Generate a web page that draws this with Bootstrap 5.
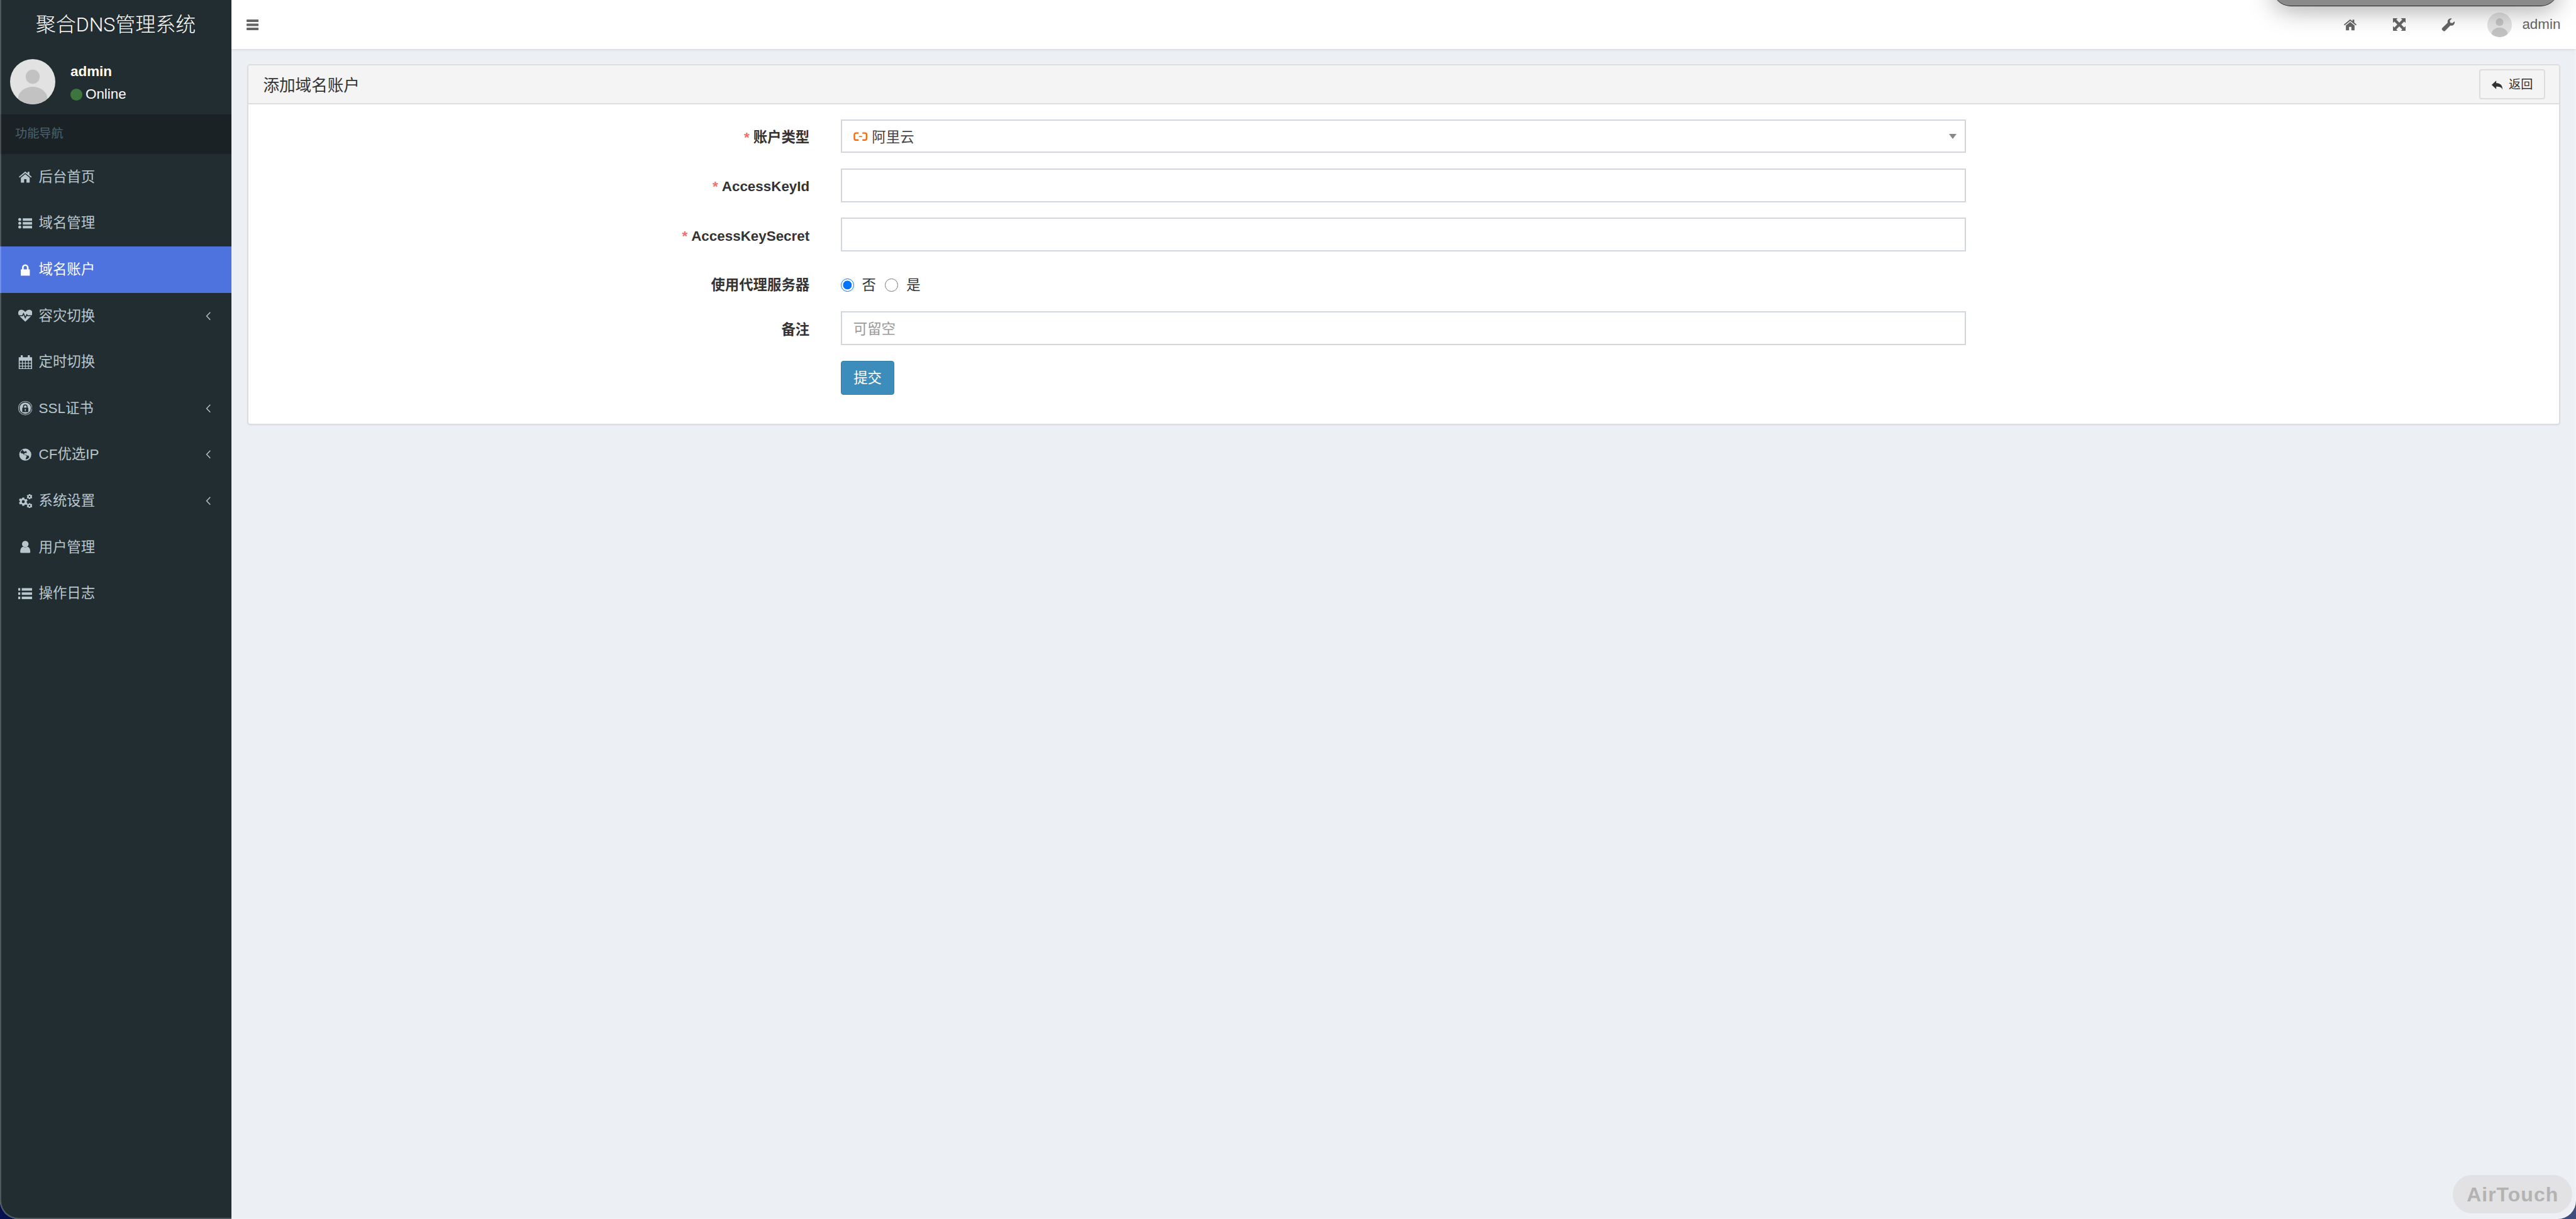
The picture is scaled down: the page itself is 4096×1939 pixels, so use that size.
<!DOCTYPE html>
<html lang="zh-CN">
<head>
<meta charset="UTF-8">
<title>添加域名账户</title>
<link href="https://cdn.jsdelivr.net/npm/bootstrap@5.3.0/dist/css/bootstrap.min.css" rel="stylesheet">
<style>
html, body { height: 100%; }
body { background: linear-gradient(90deg, #07104f, #3f4d7e); color: #333; font-family: "Liberation Sans", "Noto Sans CJK SC", sans-serif; font-size: 22.4px; overflow: hidden; }
.app-shell { height: 1939px; position: relative; overflow: hidden; background: #ecf0f5; border-radius: 0 0 29px 29px; }
.side-bar { width: 368px; background: #222d32; flex: none; }
.side-brand { height: 78.4px; color: #fff; font-size: 32px; font-weight: 300; font-family: Roboto, "Noto Sans CJK SC Light", "Noto Sans CJK SC", sans-serif; }
.user-panel { height: 104px; padding-left: 16px; gap: 24px; }
.user-pic { width: 72px; height: 72px; display: block; }
.user-info { margin-top: 4px; }
.user-name { font-weight: 700; color: #fff; line-height: 1; margin-bottom: 14px; }
.user-state { color: #fff; line-height: 1; gap: 5px; }
.state-dot { width: 19px; height: 19px; border-radius: 50%; background: #3c763d; display: inline-block; }
.nav-head { height: 62.4px; background: #1a2226; color: #4b646f; font-size: 19.2px; padding-left: 24px; }
.menu-item { height: 73.6px; color: #b8c7ce; padding: 0 32px 0 28.8px; text-decoration: none; }
.menu-item.is-on { background: #4e73df; color: #fff; }
.menu-ico { width: 22.4px; height: 22.4px; margin-right: 10.4px; fill: currentColor; flex: none; }
.menu-arrow { width: 8.6px; height: 15.6px; margin-left: auto; fill: none; stroke: currentColor; stroke-width: 1.6; }
.main-col { min-width: 0; }
.top-bar { height: 78.4px; background: #fff; box-shadow: 0 1px 4px rgba(0,0,0,.12); padding: 0 24.6px 0 24px; position: relative; }
.top-ico { fill: #666; display: block; }
.top-right { gap: 0; margin-left: auto; color: #666; }
.top-link { width: 77.6px; display: flex; justify-content: center; }
.top-name { margin-left: 16px; }
.page-body { padding: 24px 24.8px 0 24.8px; }
.form-box { border: 2px solid #ddd; border-radius: 5px; background: #fff; box-shadow: 0 1px 2px rgba(0,0,0,.05); }
.box-head { height: 61.2px; background: #f4f4f4; border-bottom: 2px solid #ddd; padding: 0 22.6px 0 23.6px; border-radius: 4px 4px 0 0; }
.box-title { font-size: 25.6px; margin: 0; padding-top: 4px; font-weight: 400; }
.back-btn { height: 47.2px; width: 104.8px; border: 2px solid #ddd; border-radius: 4px; background: #f4f4f4; color: #333; font-size: 19.2px; padding: 3px 0 0; gap: 8px; }
.box-main { padding: 24px 0 46px; }
.form-line { margin-bottom: 24.8px; min-height: 53.6px; }
.form-line.is-thin { min-height: 57.6px; margin-bottom: 12.8px; }
.line-label { width: 892.4px; flex: none; margin: 0; padding-top: 5px; text-align: right; font-weight: 700; }
.is-thin .line-label { padding-top: 0; }
.req-mark { color: #f56c6c; margin-right: 6px; }
.line-field { width: 1789.6px; margin-left: 49.6px; flex: none; position: relative; }
.text-field.form-control, .select-field { height: 53.6px; border: 2px solid #d2d6de; border-radius: 0; font-size: 22.4px; padding: 4px 18px 0; color: #444; box-shadow: none; }
.text-field.form-control::placeholder { color: #999; }
.select-field { background: #fff; gap: 7.2px; }
.ali-mark { width: 22.4px; height: 14.4px; flex: none; margin-top: -3px; }
.select-caret { position: absolute; right: 15px; top: 23px; width: 0; height: 0; border-left: 6px solid transparent; border-right: 6px solid transparent; border-top: 8px solid #888; }
.radio-opt { gap: 13px; margin-right: 14.4px; font-weight: 400; }
.radio-opt .form-check-input { width: 20.8px; height: 20.8px; margin: 0; border: 1.6px solid #767676; background-color: #fff; }
.radio-opt .form-check-input:checked { background-color: #fff; border-color: #0075ff; background-image: radial-gradient(circle closest-side, #0075ff 70%, #fff 76%); }
.submit-btn { width: 85.6px; height: 54.4px; padding: 2px 0 0; background: #3c8dbc; border: 1px solid #367fa9; border-radius: 4px; color: #fff; font-size: 22.4px; }
.float-bar { position: absolute; top: -30px; left: 3613.6px; width: 454.4px; height: 40.4px; background: #8a8a8a; border-bottom: 1px solid #222; border-radius: 0 0 28px 28px; box-shadow: 0 4px 40px rgba(0,0,0,.38); }
.air-pill { position: absolute; left: 3900px; top: 1868.8px; width: 190.4px; height: 61.6px; border-radius: 31px; background: #e2e2e4; color: #b3b3b3; font-size: 32px; font-weight: 700; letter-spacing: 1px; }
.edge-line { position: absolute; inset: 0; border: 2px solid rgba(255,255,255,.2); border-top: 0; border-radius: 0 0 29px 29px; pointer-events: none; }
</style>
</head>
<body>
<div class="app-shell d-flex">
  <aside class="side-bar">
    <div class="side-brand d-flex align-items-center justify-content-center">聚合DNS管理系统</div>
    <div class="user-panel d-flex align-items-center">
      <svg class="user-pic" viewBox="0 0 90 90"><defs><clipPath id="avClip"><circle cx="45" cy="45" r="45"/></clipPath></defs><circle cx="45" cy="45" r="45" fill="#e2e2e2"/><g clip-path="url(#avClip)" fill="#c2c2c2"><circle cx="45" cy="35" r="14"/><ellipse cx="45" cy="78" rx="29" ry="23"/></g></svg>
      <div class="user-info">
        <div class="user-name">admin</div>
        <div class="user-state d-flex align-items-center"><span class="state-dot"></span>Online</div>
      </div>
    </div>
    <div class="nav-head d-flex align-items-center">功能导航</div>
    <nav class="d-flex flex-column">
      <a class="menu-item d-flex align-items-center" href="#"><svg class="menu-ico" viewBox="2 3 24 24"><path d="M14 6 3 15l1.200 1.500L14 8.600l9.800 7.900L25 15l-4-3.300V6.500h-3v2.700zM6.500 16.700V25h5.500v-6h4v6h5.500v-8.300L14 10.500z"/></svg>后台首页</a>
      <a class="menu-item d-flex align-items-center" href="#"><svg class="menu-ico" viewBox="0 0 28 28"><circle cx="3" cy="6.500" r="3"/><circle cx="3" cy="14" r="3"/><circle cx="3" cy="21.500" r="3"/><path d="M9 4h19v5H9zM9 11.500h19v5H9zM9 19h19v5H9z"/></svg>域名管理</a>
      <a class="menu-item is-on d-flex align-items-center" href="#"><svg class="menu-ico" viewBox="0 0 28 28"><path fill-rule="evenodd" d="M5 13h2.500V9.500a6.500 6.500 0 0 1 13 0V13H23v12.500H5zM10.800 13h6.400V9.500a3.200 3.200 0 0 0-6.400 0z"/></svg>域名账户</a>
      <a class="menu-item d-flex align-items-center" href="#"><svg class="menu-ico" viewBox="0 0 28 28"><path d="M14 26 2 14.500C-1.500 10-.5 4 4 2.500c4-1.300 7.500.5 10 4 2.500-3.500 6-5.300 10-4 4.500 1.500 5.500 7.500 2 12z"/><path fill="none" stroke="#222d32" stroke-width="2" d="M0 14h8.500l2-4 3.500 8 3-6 1.500 2H28"/></svg>容灾切换<svg class="menu-arrow" viewBox="0 0 10 18"><path d="M8.500 2 1.800 9l6.700 7"/></svg></a>
      <a class="menu-item d-flex align-items-center" href="#"><svg class="menu-ico" viewBox="0 0 28 28"><path fill-rule="evenodd" d="M1 4h4V1.500a2 2 0 0 1 4 0V4h10V1.500a2 2 0 0 1 4 0V4h4.500v24H1zM3 11v4h4.500v-4zM9 11v4h4.500v-4zM15 11v4h4.500v-4zM21 11v4h4.500v-4zM3 16.500V21h4.500v-4.500zM9 16.500V21h4.500v-4.500zM15 16.500V21h4.500v-4.500zM21 16.500V21h4.500v-4.500zM3 22.500V26h4.500v-3.500zM9 22.500V26h4.500v-3.500zM15 22.500V26h4.500v-3.500zM21 22.500V26h4.500v-3.500z"/></svg>定时切换</a>
      <a class="menu-item d-flex align-items-center" href="#"><svg class="menu-ico" viewBox="0 0 28 28"><path fill-rule="evenodd" d="M14 0a14 14 0 1 1 0 28 14 14 0 0 1 0-28zm0 1a13 13 0 1 0 0 26 13 13 0 0 0 0-26zm0 1.800a11.200 11.200 0 1 1 0 22.400 11.200 11.200 0 0 1 0-22.400zM8 13h1.500v-2a4.500 4.500 0 0 1 9 0v2H20v9H8zm3.500 0h5v-2a2.500 2.500 0 0 0-5 0zm2.500 2.500a1.400 1.400 0 0 0-.7 2.600V20h1.400v-1.900a1.400 1.400 0 0 0-.7-2.600z"/></svg>SSL证书<svg class="menu-arrow" viewBox="0 0 10 18"><path d="M8.500 2 1.800 9l6.700 7"/></svg></a>
      <a class="menu-item d-flex align-items-center" href="#"><svg class="menu-ico" viewBox="0 0 28 28"><path fill-rule="evenodd" d="M14 2a12 12 0 1 1 0 24 12 12 0 0 1 0-24zM9 4.500c-2 1-4 3-4.600 5.500L7 11.500l2.500.5 2 2.500 3.500.5 2 2-1.500 3-1 3.500c3.500-.5 6-2 7.500-4.500l-1.500-3-3-.5-2.500-1.500-2.500.5-1-2 2-2 3 .5.500-3-2.500-1.500-1 1.500-2.500-.5z"/></svg>CF优选IP<svg class="menu-arrow" viewBox="0 0 10 18"><path d="M8.500 2 1.800 9l6.700 7"/></svg></a>
      <a class="menu-item d-flex align-items-center" href="#"><svg class="menu-ico" viewBox="0 0 28 28"><path fill-rule="evenodd" d="M8 7h4l.6 2.600 1.500.8 2.500-.9 2 3.400-2 1.800v1.600l2 1.800-2 3.400-2.500-.9-1.500.8L12 23H8l-.6-2.600-1.500-.8-2.500.9-2-3.400 2-1.800v-1.600l-2-1.800 2-3.400 2.500.9 1.500-.8zm2 5a3 3 0 1 0 0 6 3 3 0 0 0 0-6z"/><path fill-rule="evenodd" d="M21 0h3l.3 1.500 1.500.6 1.200-.8 1 2-1 1v1.400l1 1-1 2-1.200-.8-1.500.6L24 10h-3l-.3-1.500-1.500-.6-1.200.8-1-2 1-1V4.300l-1-1 1-2 1.200.8 1.500-.6zm1.500 3.400a1.600 1.600 0 1 0 0 3.200 1.600 1.600 0 0 0 0-3.200zM21 18h3l.3 1.500 1.500.6 1.200-.8 1 2-1 1v1.400l1 1-1 2-1.200-.8-1.500.6L24 28h-3l-.3-1.500-1.500-.6-1.200.8-1-2 1-1v-1.400l-1-1 1-2 1.200.8 1.500-.6zm1.500 3.400a1.600 1.600 0 1 0 0 3.200 1.600 1.600 0 0 0 0-3.200z"/></svg>系统设置<svg class="menu-arrow" viewBox="0 0 10 18"><path d="M8.500 2 1.800 9l6.700 7"/></svg></a>
      <a class="menu-item d-flex align-items-center" href="#"><svg class="menu-ico" viewBox="0 0 28 28"><circle cx="14" cy="8" r="6.500"/><path d="M4 24c0-6 2-10 6-10.500 2.500 1.500 5.500 1.500 8 0 4 .5 6 4.500 6 10.500 0 1-1 1.500-2 1.500H6c-1 0-2-.5-2-1.500z"/></svg>用户管理</a>
      <a class="menu-item d-flex align-items-center" href="#"><svg class="menu-ico" viewBox="0 0 28 28"><path d="M0 3h4v5H0zM0 11.500h4v5H0zM0 20h4v5H0zM7 3h21v5H7zM7 11.500h21v5H7zM7 20h21v5H7z"/></svg>操作日志</a>
    </nav>
  </aside>
  <main class="main-col flex-grow-1">
    <header class="top-bar d-flex align-items-center">
      <svg class="top-ico" width="19.200" height="17" viewBox="0 0 19.200 17"><rect width="19.200" height="4" rx="1"/><rect y="6.500" width="19.200" height="4" rx="1"/><rect y="13" width="19.200" height="4" rx="1"/></svg>
      <div class="top-right d-flex align-items-center">
        <span class="top-link"><svg class="top-ico" width="22" height="22" viewBox="2 3 24 24"><path d="M14 6 3 15l1.200 1.500L14 8.600l9.800 7.900L25 15l-4-3.300V6.500h-3v2.700zM6.500 16.700V25h5.500v-6h4v6h5.500v-8.300L14 10.500z"/></svg></span>
        <span class="top-link"><svg class="top-ico" width="20" height="20" viewBox="0 0 20 20"><path d="M0 0h7.500L5.300 2.200 10 6.900l4.700-4.700L12.500 0H20v7.500l-2.200-2.200L13.100 10l4.700 4.700 2.200-2.200V20h-7.500l2.200-2.200L10 13.100l-4.700 4.700L7.500 20H0v-7.500l2.200 2.200L6.900 10 2.200 5.300 0 7.500z"/></svg></span>
        <span class="top-link"><svg class="top-ico" width="22" height="22" viewBox="0 0 24 24"><path d="M22.800 6.500c.6 1.900.1 4.200-1.500 5.700-1.600 1.600-3.800 2-5.700 1.300L6.500 23c-1 1-2.500 1-3.500 0l-1.500-1.500c-1-1-1-2.500 0-3.500l9.500-9.200C10.300 6.800 10.800 4.500 12.300 3 13.900 1.400 16.200.9 18.200 1.600L14.500 5.300l.8 3.500 3.500.8z"/></svg></span>
        <svg class="ms-4" width="39" height="39" viewBox="0 0 90 90"><defs><clipPath id="avClip2"><circle cx="45" cy="45" r="45"/></clipPath></defs><circle cx="45" cy="45" r="45" fill="#e2e2e2"/><g clip-path="url(#avClip2)" fill="#c2c2c2"><circle cx="45" cy="35" r="14"/><ellipse cx="45" cy="78" rx="29" ry="23"/></g></svg>
        <span class="top-name">admin</span>
      </div>
    </header>
    <div class="page-body">
      <section class="form-box">
        <div class="box-head d-flex align-items-center justify-content-between">
          <h3 class="box-title">添加域名账户</h3>
          <button type="button" class="back-btn btn d-flex align-items-center justify-content-center"><svg width="20" height="17" viewBox="0 0 22 18"><path fill="#333" d="M9 1v4.500c6 0 11 2.500 11 11.500-1.500-4.500-5-5.500-11-5.500V16L1 8.500z"/></svg>返回</button>
        </div>
        <form class="box-main">
          <div class="form-line d-flex align-items-center">
            <label class="line-label"><span class="req-mark">*</span>账户类型</label>
            <div class="line-field">
              <div class="select-field d-flex align-items-center">
                <svg class="ali-mark" viewBox="0 0 22 14"><path fill="none" stroke="#ff6a00" stroke-width="2.400" d="M8 1.500H4A2.500 2.500 0 0 0 1.500 4v6A2.500 2.500 0 0 0 4 12.500h4M14 1.500h4A2.500 2.500 0 0 1 20.500 4v6a2.500 2.500 0 0 1-2.500 2.500h-4"/><path stroke="#ff6a00" stroke-width="1.600" d="M8.500 7h5"/></svg>
                <span>阿里云</span>
              </div>
              <span class="select-caret"></span>
            </div>
          </div>
          <div class="form-line d-flex align-items-center">
            <label class="line-label" for="keyId"><span class="req-mark">*</span>AccessKeyId</label>
            <div class="line-field"><input id="keyId" class="form-control text-field" type="text"></div>
          </div>
          <div class="form-line d-flex align-items-center">
            <label class="line-label" for="keySecret"><span class="req-mark">*</span>AccessKeySecret</label>
            <div class="line-field"><input id="keySecret" class="form-control text-field" type="text"></div>
          </div>
          <div class="form-line is-thin d-flex align-items-center">
            <label class="line-label">使用代理服务器</label>
            <div class="line-field d-flex align-items-center">
              <label class="radio-opt d-flex align-items-center"><input class="form-check-input" type="radio" name="useProxy" checked>否</label>
              <label class="radio-opt d-flex align-items-center"><input class="form-check-input" type="radio" name="useProxy">是</label>
            </div>
          </div>
          <div class="form-line d-flex align-items-center">
            <label class="line-label" for="remark">备注</label>
            <div class="line-field"><input id="remark" class="form-control text-field" type="text" placeholder="可留空"></div>
          </div>
          <div class="d-flex">
            <div class="line-label"></div>
            <div class="line-field"><button type="button" class="submit-btn btn">提交</button></div>
          </div>
        </form>
      </section>
    </div>
  </main>
  <div class="float-bar"></div>
  <div class="air-pill d-flex align-items-center justify-content-center">AirTouch</div>
  <div class="edge-line"></div>
</div>
<script src="https://cdn.jsdelivr.net/npm/bootstrap@5.3.0/dist/js/bootstrap.bundle.min.js"></script>
</body>
</html>
